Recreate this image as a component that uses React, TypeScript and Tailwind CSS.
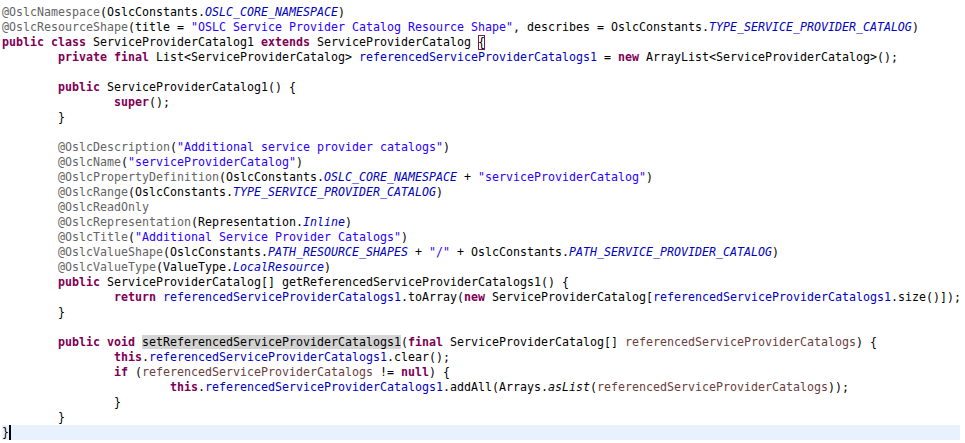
type Kind = "t" | "a" | "k" | "s" | "c" | "f" | "p" | "i" | "h" | "b";
type Tok = [string, Kind];

const T = "        ";

const styles: Record<Kind, string> = {
  t: "text-black",
  a: "text-[#646464]",
  k: "text-[#7f0055] font-bold",
  s: "text-[#2a00ff]",
  c: "text-[#0000c0] italic",
  f: "text-[#0000c0]",
  p: "text-[#6a3e3e]",
  i: "text-black italic",
  h: "text-black bg-[#d4d4d4]",
  b: "text-black inline-block h-[15px] align-top shadow-[inset_0_0_0_1px_#7a1a4a]",
};

const lines: Tok[][] = [
  [["@OslcNamespace", "a"], ["(OslcConstants.", "t"], ["OSLC_CORE_NAMESPACE", "c"], [")", "t"]],
  [
    ["@OslcResourceShape", "a"],
    ["(title = ", "t"],
    ['"OSLC Service Provider Catalog Resource Shape"', "s"],
    [", describes = OslcConstants.", "t"],
    ["TYPE_SERVICE_PROVIDER_CATALOG", "c"],
    [")", "t"],
  ],
  [
    ["public", "k"],
    [" ", "t"],
    ["class", "k"],
    [" ServiceProviderCatalog1 ", "t"],
    ["extends", "k"],
    [" ServiceProviderCatalog ", "t"],
    ["{", "b"],
  ],
  [
    [T, "t"],
    ["private", "k"],
    [" ", "t"],
    ["final", "k"],
    [" List<ServiceProviderCatalog> ", "t"],
    ["referencedServiceProviderCatalogs1", "f"],
    [" = ", "t"],
    ["new", "k"],
    [" ArrayList<ServiceProviderCatalog>();", "t"],
  ],
  [],
  [[T, "t"], ["public", "k"], [" ServiceProviderCatalog1() {", "t"]],
  [[T + T, "t"], ["super", "k"], ["();", "t"]],
  [[T + "}", "t"]],
  [],
  [[T, "t"], ["@OslcDescription", "a"], ["(", "t"], ['"Additional service provider catalogs"', "s"], [")", "t"]],
  [[T, "t"], ["@OslcName", "a"], ["(", "t"], ['"serviceProviderCatalog"', "s"], [")", "t"]],
  [
    [T, "t"],
    ["@OslcPropertyDefinition", "a"],
    ["(OslcConstants.", "t"],
    ["OSLC_CORE_NAMESPACE", "c"],
    [" + ", "t"],
    ['"serviceProviderCatalog"', "s"],
    [")", "t"],
  ],
  [[T, "t"], ["@OslcRange", "a"], ["(OslcConstants.", "t"], ["TYPE_SERVICE_PROVIDER_CATALOG", "c"], [")", "t"]],
  [[T, "t"], ["@OslcReadOnly", "a"]],
  [[T, "t"], ["@OslcRepresentation", "a"], ["(Representation.", "t"], ["Inline", "c"], [")", "t"]],
  [[T, "t"], ["@OslcTitle", "a"], ["(", "t"], ['"Additional Service Provider Catalogs"', "s"], [")", "t"]],
  [
    [T, "t"],
    ["@OslcValueShape", "a"],
    ["(OslcConstants.", "t"],
    ["PATH_RESOURCE_SHAPES", "c"],
    [" + ", "t"],
    ['"/"', "s"],
    [" + OslcConstants.", "t"],
    ["PATH_SERVICE_PROVIDER_CATALOG", "c"],
    [")", "t"],
  ],
  [[T, "t"], ["@OslcValueType", "a"], ["(ValueType.", "t"], ["LocalResource", "c"], [")", "t"]],
  [[T, "t"], ["public", "k"], [" ServiceProviderCatalog[] getReferencedServiceProviderCatalogs1() {", "t"]],
  [
    [T + T, "t"],
    ["return", "k"],
    [" ", "t"],
    ["referencedServiceProviderCatalogs1", "f"],
    [".toArray(", "t"],
    ["new", "k"],
    [" ServiceProviderCatalog[", "t"],
    ["referencedServiceProviderCatalogs1", "f"],
    [".size()]);", "t"],
  ],
  [[T + "}", "t"]],
  [],
  [
    [T, "t"],
    ["public", "k"],
    [" ", "t"],
    ["void", "k"],
    [" ", "t"],
    ["setReferencedServiceProviderCatalogs1", "h"],
    ["(", "t"],
    ["final", "k"],
    [" ServiceProviderCatalog[] ", "t"],
    ["referencedServiceProviderCatalogs", "p"],
    [") {", "t"],
  ],
  [[T + T, "t"], ["this", "k"], [".", "t"], ["referencedServiceProviderCatalogs1", "f"], [".clear();", "t"]],
  [
    [T + T, "t"],
    ["if", "k"],
    [" (", "t"],
    ["referencedServiceProviderCatalogs", "p"],
    [" != ", "t"],
    ["null", "k"],
    [") {", "t"],
  ],
  [
    [T + T + T, "t"],
    ["this", "k"],
    [".", "t"],
    ["referencedServiceProviderCatalogs1", "f"],
    [".addAll(Arrays.", "t"],
    ["asList", "i"],
    ["(", "t"],
    ["referencedServiceProviderCatalogs", "p"],
    ["));", "t"],
  ],
  [[T + T + "}", "t"]],
  [[T + "}", "t"]],
];

export default function App() {
  return (
    <div className="w-[965px] h-[443px] overflow-hidden bg-white pt-[5px] pl-[2px] font-['DejaVu_Sans_Mono',monospace] text-[11.63px] leading-[15px]">
      {lines.map((line, i) => (
        <div key={i} className="h-[15px] whitespace-pre">
          {line.map(([text, kind], j) => (
            <span key={j} className={styles[kind]}>
              {text}
            </span>
          ))}
        </div>
      ))}
      {/* current line with caret */}
      <div className="h-[15px] whitespace-pre bg-[#e8f2fe] mr-[5px]">
        <span className="text-black">{"}"}</span>
        <span className="inline-block w-[2px] h-[15px] bg-black align-top" />
      </div>
    </div>
  );
}
